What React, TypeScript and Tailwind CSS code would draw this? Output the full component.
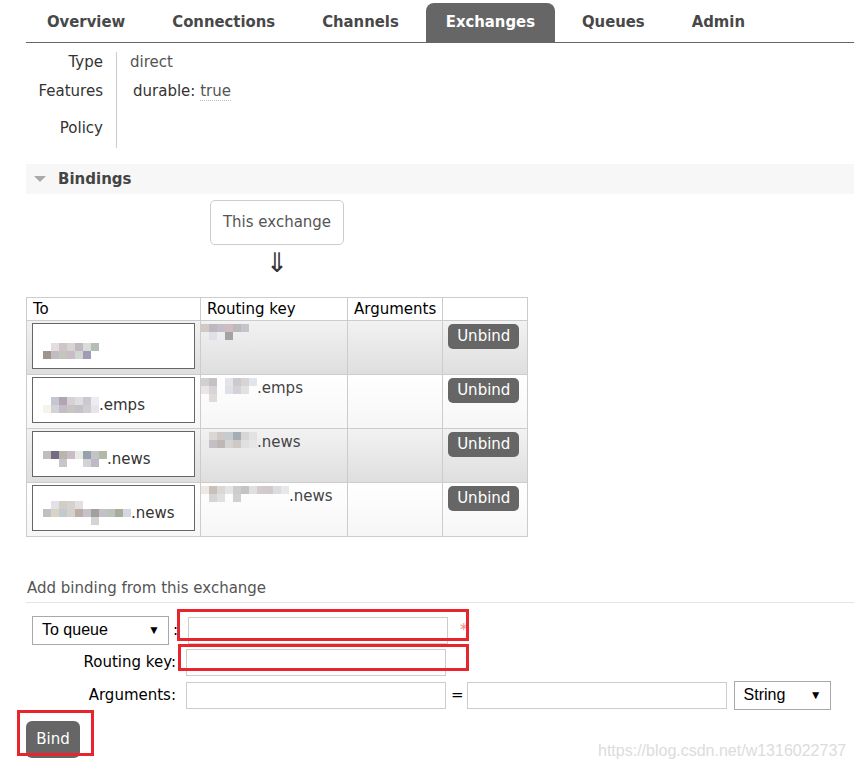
import React from "react";

const tabs = ["Overview", "Connections", "Channels", "Exchanges", "Queues", "Admin"];

// pixelated (blurred) text blocks, one string per row of cells, "" = empty
function Mosaic({ rows, size = 8 }: { rows: string[][]; size?: number }) {
  return (
    <span className="inline-flex flex-col align-middle">
      {rows.map((r, i) => (
        <span key={i} className="flex">
          {r.map((c, j) => (
            <span key={j} style={{ width: size, height: size, background: c || "transparent" }} />
          ))}
        </span>
      ))}
    </span>
  );
}

const m = {
  to1: [
    ["", "#e4dcdf", "#cfc4c9", "#d8d3d3", "#c2b8c2", "#d8ddd8", "#b4beb4"],
    ["#9c958f", "#c2bbc0", "#c2c7bd", "#c8bcc8", "#d0d6d0", "#a29bb8", ""],
  ],
  rk1: [
    ["#d2c9c6", "#bdb8bd", "#c2bec7", "#cebcc1", "#b9b9be", "#c4c4c9"],
    ["", "#e0e0e9", "", "#a4a2a4", "", ""],
  ],
  to2: [
    ["", "#c6c6d0", "#b2a4b2", "#d6d1d6", "#dedede", "#ccc8d2", "#ececf2"],
    ["#f6f3ea", "#d2d2d7", "#c2bdc7", "#cac5c0", "#c2c2c7", "#d2cdd2", "#e8e4ea"],
  ],
  rk2: [
    ["#d4cfcf", "#c6c1c6", "", "#e4e4e9", "#cec9ce", "#d8d4d4", "#e4e4ec"],
    ["#ebe6e6", "#d8d3d8", "", "#e0e0e9", "#d6d1d6", "#e2e2e2", ""],
    ["", "#e0dbdb", "", "", "", "", ""],
  ],
  to3: [
    ["#c2bdbd", "#786a84", "#b6b6ad", "#c9bcc9", "#eaeae5", "#97a0ad", "#c4c4c4", "#b0baa8"],
    ["", "", "#cac5ca", "", "", "#d2d2d7", "#beb9c6", ""],
  ],
  rk3: [
    ["", "#dcd7d7", "#cec9c9", "#c6cbd0", "#a4adb6", "#d6d6d6", "#e2e2e2"],
    ["#ecebeb", "#c4bfc4", "#bfb6b6", "#d4d4d4", "#cec9c4", "#e0e0e0", "#e6e6e6"],
  ],
  to4: [
    ["", "#e4e0e8", "#cfcfc6", "#d6d1d1", "#e4dfdf", "", "", "", "", "", ""],
    ["#c0c0c4", "#d8d3c6", "#c4c9ce", "#d2d2ca", "#bcaea6", "#c6c2c6", "#a49f9f", "#c4bfc9", "#bac4ba", "#a8ad9b", "#d6d6e0"],
    ["", "", "", "", "", "", "#d4d4d4", "", "", "", ""],
  ],
  rk4: [
    ["#ece8e4", "#cabfbb", "#dcd7d7", "#e4e4e4", "#cccccf", "#c4c4c4", "#e0e0e0", "#d4cbcf", "#cfcbcb", "#dcdce0", "#e8e8e8"],
    ["", "#d8d4d4", "#e0e0e0", "", "#d0d0d4", "", "", "", "", "", ""],
  ],
};

const rows = [
  { to: m.to1, toSuffix: "", rk: m.rk1, rkSuffix: "", bg: "bg-gradient-to-b from-[#f2f2f2] to-[#dedede]" },
  { to: m.to2, toSuffix: ".emps", rk: m.rk2, rkSuffix: ".emps", bg: "bg-gradient-to-b from-[#ffffff] to-[#f6f6f6]" },
  { to: m.to3, toSuffix: ".news", rk: m.rk3, rkSuffix: ".news", bg: "bg-gradient-to-b from-[#f2f2f2] to-[#dedede]" },
  { to: m.to4, toSuffix: ".news", rk: m.rk4, rkSuffix: ".news", bg: "bg-gradient-to-b from-[#ffffff] to-[#f6f6f6]" },
];

export default function App() {
  return (
    <div className="relative h-[768px] w-[854px] overflow-hidden bg-white font-['DejaVu_Sans',Verdana,sans-serif] text-[15px] text-[#333]">
      {/* tabs */}
      <div className="ml-[26px] mt-[3px] flex h-[40px] items-stretch gap-[7px] border-b border-[#666] pl-px">
        {tabs.map((t) => (
          <div
            key={t}
            className={
              "flex items-center rounded-t-[8px] px-[20px] pb-px font-['DejaVu_Sans_Condensed','DejaVu_Sans',sans-serif] text-[16.5px] font-bold " +
              (t === "Exchanges" ? "bg-[#666] text-white" : "text-[#484848]")
            }
          >
            {t}
          </div>
        ))}
      </div>

      {/* details */}
      <div className="ml-[26px] mt-[9px] flex">
        <div className="w-[91px] border-r border-[#ccc] pr-[13px] pb-[10px] text-right text-[#333]">
          <div className="h-[20px] leading-[20px]">Type</div>
          <div className="mt-[9px] h-[20px] leading-[20px]">Features</div>
          <div className="mt-[17px] h-[20px] leading-[20px]">Policy</div>
        </div>
        <div className="pl-[13px] text-[#555]">
          <div className="h-[20px] leading-[20px]">direct</div>
          <div className="mt-[9px] h-[20px] pl-[3px] leading-[20px]">
            <span className="text-[#333]">durable:</span>{" "}
            <span className="border-b border-dotted border-[#bbb]">true</span>
          </div>
        </div>
      </div>

      {/* bindings header */}
      <div className="ml-[26px] mt-[16px] flex h-[30px] items-center bg-[#f7f7f7]">
        <svg width="14" height="8" viewBox="0 0 14 8" className="ml-[7px]">
          <path d="M1 1 L13 1 L7 7 Z" fill="#aaa" />
        </svg>
        <span className="ml-[11px] font-bold text-[#444]">Bindings</span>
      </div>

      <div className="ml-[210px] mt-[6px] flex w-[134px] flex-col items-center">
        <div className="flex h-[45px] w-[134px] items-center justify-center rounded-[5px] border border-[#ccc] text-[#555]">
          This exchange
        </div>
        <div className="mt-[2px] text-[27px] leading-[32px] text-[#333]">⇓</div>
      </div>

      {/* bindings table */}
      <table className="ml-[26px] mt-[18px] w-[502px] border-collapse border border-[#ccc]">
        <thead>
          <tr className="h-[23px] text-left text-black">
            <th className="w-[174px] border border-[#ccc] px-[6px] font-normal leading-[22px]">To</th>
            <th className="w-[147px] border border-[#ccc] px-[6px] font-normal leading-[22px]">Routing key</th>
            <th className="w-[94px] border border-[#ccc] px-[6px] font-normal leading-[22px]">Arguments</th>
            <th className="border border-[#ccc]"></th>
          </tr>
        </thead>
        <tbody>
          {rows.map((r, i) => (
            <tr key={i} className={"h-[54px] " + r.bg}>
              <td className="border border-[#ccc] px-[5px] py-[2px] align-top">
                <div className="flex h-[46px] w-[163px] items-center border border-[#666] bg-white px-[10px] pt-[10px] text-[#333]">
                  <Mosaic rows={r.to} />
                  <span>{r.toSuffix}</span>
                </div>
              </td>
              <td className="border border-[#ccc] px-0 pt-[3px] align-top text-[#444]">
                <div className="flex items-start">
                  <Mosaic rows={r.rk} />
                  <span className="leading-[20px]">{r.rkSuffix}</span>
                </div>
              </td>
              <td className="border border-[#ccc]"></td>
              <td className="border border-[#ccc] px-[5px] pt-[3px] align-top">
                <div className="flex h-[25px] w-[71px] items-center justify-center rounded-[5px] bg-[#666] text-white">
                  Unbind
                </div>
              </td>
            </tr>
          ))}
        </tbody>
      </table>

      {/* add binding */}
      <div className="ml-[26px] mt-[40px] border-b border-[#e4e4e4] pb-[2px] pl-px text-[#555]">
        Add binding from this exchange
      </div>

      <div className="relative ml-[26px] mt-[13px]">
        <div className="flex items-center">
          <div className="ml-[6px] flex h-[29px] w-[137px] items-center justify-between border border-[#a9a9a9] pl-[9px] pr-[8px] font-['Liberation_Sans',Arial,sans-serif] text-[16px] text-black">
            <span>To queue</span>
            <span className="text-[12px]">▼</span>
          </div>
          <span className="ml-[4px] text-black">:</span>
          <div className="ml-[10px] h-[27px] w-[260px] border border-[#ccc]"></div>
          <span className="ml-[12px] text-[15px] text-[#f08b8b]">*</span>
        </div>
        <div className="mt-[4px] flex items-center">
          <span className="w-[150px] text-right text-black">Routing key:</span>
          <div className="ml-[10px] h-[27px] w-[260px] border border-[#ccc]"></div>
        </div>
        <div className="mt-[5px] flex items-center">
          <span className="w-[150px] text-right text-black">Arguments:</span>
          <div className="ml-[10px] h-[27px] w-[260px] border border-[#ccc]"></div>
          <span className="ml-[5px] text-black">=</span>
          <div className="ml-[3px] h-[27px] w-[260px] border border-[#ccc]"></div>
          <div className="ml-[7px] flex h-[29px] w-[97px] items-center justify-between border border-[#a9a9a9] pl-[9px] pr-[8px] font-['Liberation_Sans',Arial,sans-serif] text-[16px] text-black">
            <span>String</span>
            <span className="text-[12px]">▼</span>
          </div>
        </div>
        <div className="mt-[11px] flex h-[37px] w-[54px] items-center justify-center rounded-[6px] bg-[#666] text-white">
          Bind
        </div>

        {/* red annotation boxes */}
        <div className="absolute left-[151px] top-[-7px] h-[32px] w-[292px] border-[3px] border-[#e8242c]"></div>
        <div className="absolute left-[152px] top-[28px] h-[27px] w-[291px] border-[3px] border-[#e8242c]"></div>
        <div className="absolute left-[-9px] top-[94px] h-[46px] w-[77px] border-[3px] border-[#e8242c]"></div>
      </div>

      <div className="absolute left-[598px] top-[739px] font-['Liberation_Sans',Arial,sans-serif] text-[16px] text-[#dcdcdc]">
        https://blog.csdn.net/w1316022737
      </div>
    </div>
  );
}
